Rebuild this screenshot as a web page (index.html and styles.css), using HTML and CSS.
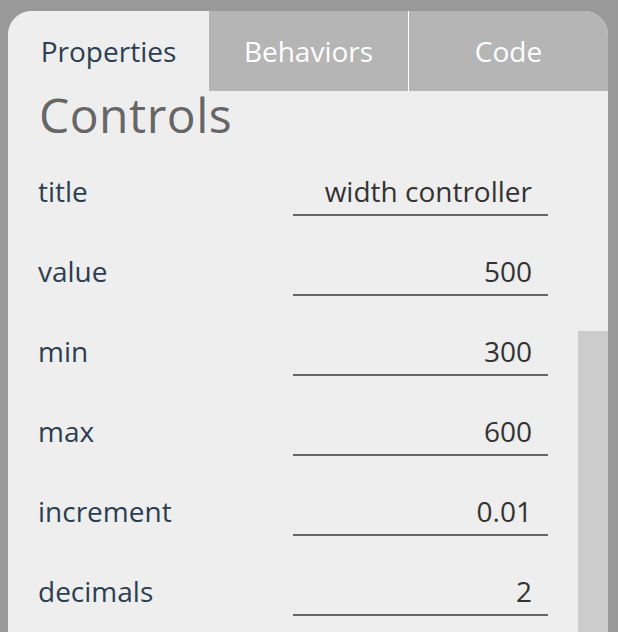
FILE: index.html
```html
<!DOCTYPE html>
<html>
<head>
<meta charset="utf-8">
<link rel="stylesheet" href="styles.css">
</head>
<body>
<div class="panel">
  <div class="tabs">
    <div class="tab tab-active">Properties</div>
    <div class="tab tab-mid">Behaviors</div>
    <div class="tab tab-last">Code</div>
  </div>
  <div class="body">
    <div class="content">
      <h1 class="heading">Controls</h1>
      <div class="row"><div class="label">title</div><div class="field">width controller</div></div>
      <div class="row"><div class="label">value</div><div class="field">500</div></div>
      <div class="row"><div class="label">min</div><div class="field">300</div></div>
      <div class="row"><div class="label">max</div><div class="field">600</div></div>
      <div class="row"><div class="label">increment</div><div class="field">0.01</div></div>
      <div class="row"><div class="label">decimals</div><div class="field">2</div></div>
    </div>
    <div class="scroll"><div class="thumb"></div></div>
  </div>
</div>
</body>
</html>
```
FILE: styles.css
```css
html, body {
  margin: 0;
  padding: 0;
  height: 100%;
  overflow: hidden;
}
body {
  background: #999999;
  font-family: "Open Sans", "Noto Sans", sans-serif;
}
.panel {
  margin: 11px 0 0 8px;
  width: 600px;
  height: calc(100vh - 11px);
  background: #eeeeee;
  border-radius: 24px 24px 0 0;
  overflow: hidden;
  display: flex;
  flex-direction: column;
}
.tabs {
  display: flex;
  height: 80px;
  flex: none;
}
.tab {
  height: 80px;
  line-height: 80px;
  font-size: 28px;
  text-align: center;
  color: #ffffff;
  background: #b5b5b5;
  box-sizing: border-box;
}
.tab-active {
  width: 201px;
  background: #eeeeee;
  color: #2c3e50;
}
.tab-mid {
  width: 200px;
  border-right: 1px solid #ffffff;
}
.tab-last {
  width: 199px;
}
.body {
  flex: 1;
  display: flex;
  min-height: 0;
}
.content {
  flex: 1;
  padding: 0 30px 0 30px;
}
.heading {
  margin: 0;
  padding: 3px 0 0 1px;
  font-size: 48px;
  line-height: 42px;
  font-weight: 400;
  color: #666666;
  letter-spacing: 0.5px;
}
.row {
  display: flex;
  height: 80px;
}
.label {
  flex: 1;
  padding-top: 36px;
  line-height: 38px;
  font-size: 28px;
  color: #2c3e50;
}
.field {
  width: 255px;
  height: 80px;
  box-sizing: border-box;
  padding: 36px 16px 0 0;
  line-height: 38px;
  font-size: 28px;
  text-align: right;
  color: #333333;
  border-bottom: 2px solid #666666;
}
.scroll {
  width: 30px;
  flex: none;
}
.thumb {
  margin-top: 240px;
  height: 400px;
  background: #cccccc;
}
```
